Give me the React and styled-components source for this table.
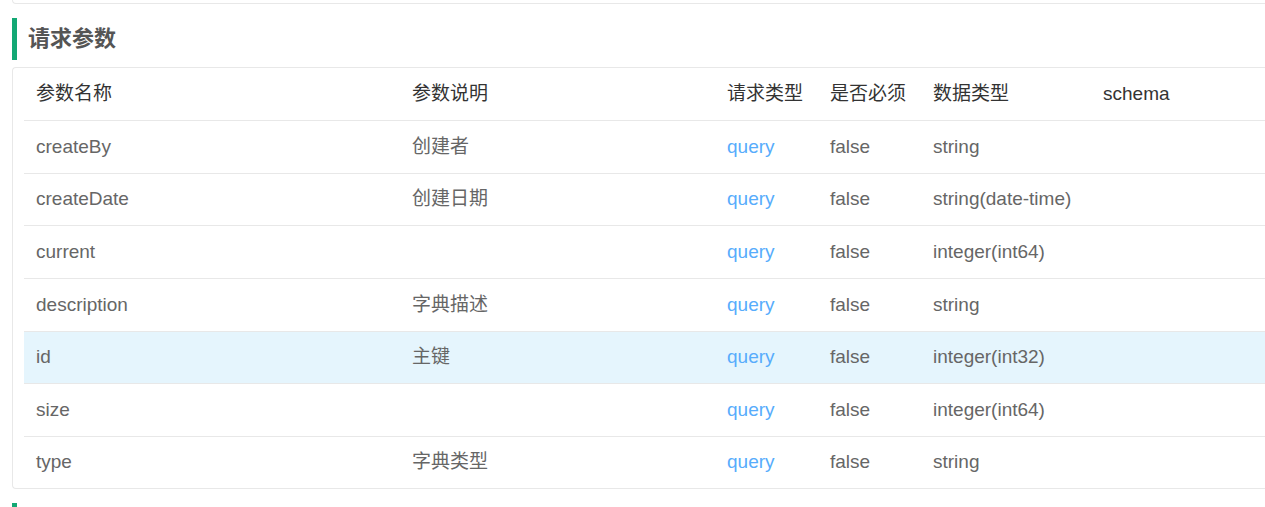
import React from "react";
import styled, { createGlobalStyle } from "styled-components";

const Global = createGlobalStyle`
  html, body { margin: 0; padding: 0; background: #fff; overflow: hidden; }
  body { font-family: "Liberation Sans", "Noto Sans CJK SC", sans-serif; }
`;

const Page = styled.div`
  width: 1265px;
  height: 507px;
  overflow: hidden;
  padding-left: 12px;
  box-sizing: border-box;
`;

const PrevCard = styled.div`
  height: 3px;
  margin-right: -40px;
  border: 1px solid #e8e8e8;
  border-top: none;
  border-right: none;
  border-radius: 0 0 0 4px;
`;

const Heading = styled.h3`
  margin: 14px 0 7px;
  height: 42px;
  display: flex;
  align-items: center;
  border-left: 5px solid #13a874;
  padding-left: 11px;
  font-size: 22px;
  font-weight: bold;
  color: #555;
  line-height: 1;
`;

const NextHeading = styled.div`
  margin-top: 14px;
  height: 42px;
  border-left: 5px solid #13a874;
`;

const Card = styled.div`
  margin-right: -60px;
  border: 1px solid #e8e8e8;
  border-right: none;
  border-radius: 4px 0 0 4px;
  padding-left: 11px;
`;

const Row = styled.div`
  display: grid;
  grid-template-columns: 376px 315px 103px 103px 170px 1fr;
  height: ${(p) => (p.$head ? "53px" : p.$last ? "51px" : "52.67px")};
  box-sizing: border-box;
  border-bottom: ${(p) => (p.$last ? "none" : "1px solid #e8e8e8")};
  background: ${(p) => (p.$active ? "#e5f5fd" : "transparent")};
  align-items: center;
  font-size: 19px;
  line-height: 24px;
  color: ${(p) => (p.$head ? "#333" : "#666")};
`;

const Cell = styled.div`
  padding-left: 12px;
  white-space: nowrap;
  color: ${(p) => (p.$link ? "#57acfc" : "inherit")};
`;

const rows = [
  ["createBy", "创建者", "string"],
  ["createDate", "创建日期", "string(date-time)"],
  ["current", "", "integer(int64)"],
  ["description", "字典描述", "string"],
  ["id", "主键", "integer(int32)"],
  ["size", "", "integer(int64)"],
  ["type", "字典类型", "string"],
];

export default function App() {
  return (
    <>
      <Global />
      <Page>
        <PrevCard />
        <Heading>请求参数</Heading>
        <Card>
          <Row $head>
            <Cell>参数名称</Cell>
            <Cell>参数说明</Cell>
            <Cell>请求类型</Cell>
            <Cell>是否必须</Cell>
            <Cell>数据类型</Cell>
            <Cell>schema</Cell>
          </Row>
          {rows.map(([name, desc, type], i) => (
            <Row key={name} $active={name === "id"} $last={i === rows.length - 1}>
              <Cell>{name}</Cell>
              <Cell>{desc}</Cell>
              <Cell $link>query</Cell>
              <Cell>false</Cell>
              <Cell>{type}</Cell>
              <Cell />
            </Row>
          ))}
        </Card>
        <NextHeading />
      </Page>
    </>
  );
}
